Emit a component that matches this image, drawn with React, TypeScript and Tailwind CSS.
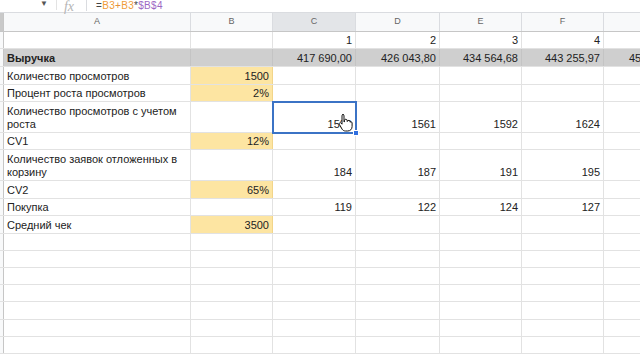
import React from 'react';

type Row = {
  h: string;
  label?: string;
  b?: string;
  yellow?: boolean;
  vals?: string[];
  total?: boolean;
};

const rows: Row[] = [
  { h: 'h-[17px]', vals: ['1', '2', '3', '4', ''] },
  { h: 'h-[18px]', label: 'Выручка', total: true, vals: ['417 690,00', '426 043,80', '434 564,68', '443 255,97', '452 121,09'] },
  { h: 'h-[18px]', label: 'Количество просмотров', b: '1500', yellow: true },
  { h: 'h-[17px]', label: 'Процент роста просмотров', b: '2%', yellow: true },
  { h: 'h-[31px]', label: 'Количество просмотров с учетом роста', vals: ['1530', '1561', '1592', '1624', ''] },
  { h: 'h-[17px]', label: 'CV1', b: '12%', yellow: true },
  { h: 'h-[31px]', label: 'Количество заявок отложенных в корзину', vals: ['184', '187', '191', '195', ''] },
  { h: 'h-[18px]', label: 'CV2', b: '65%', yellow: true },
  { h: 'h-[17px]', label: 'Покупка', vals: ['119', '122', '124', '127', ''] },
  { h: 'h-[18px]', label: 'Средний чек', b: '3500', yellow: true },
  { h: 'h-[17px]' },
  { h: 'h-[17px]' },
  { h: 'h-[17px]' },
  { h: 'h-[17px]' },
  { h: 'h-[18px]' },
  { h: 'h-[17px]' },
  { h: 'h-[17px]' },
];

const colW = ['w-[83px]', 'w-[84px]', 'w-[82px]', 'w-[82px]', 'w-[84px]'];
const letters = ['C', 'D', 'E', 'F', 'G'];

function Cursor() {
  return (
    <svg width="15" height="19" viewBox="0 0 15 19" className="absolute left-[338px] top-[113px]">
      <path
        d="M4.5 1.5c.9 0 1.5.6 1.5 1.5v6l.5-.3V7.5c0-.8.6-1.3 1.3-1.3s1.3.5 1.3 1.3v1l.4-.2c.2-.6.7-.9 1.3-.9.7 0 1.2.5 1.2 1.2v.6c.3-.3.6-.4 1-.4.6 0 1.1.5 1.1 1.1v3.6c0 2.6-1.8 4.5-4.4 4.5H7.4c-1.4 0-2.5-.7-3.3-1.8L1.4 11.4c-.4-.6-.2-1.3.4-1.6.5-.3 1.1-.1 1.4.3l.8 1.1V3c0-.9.6-1.5 1.5-1.5z"
        fill="#fff"
        stroke="#111"
        strokeWidth="1"
        strokeLinejoin="round"
      />
    </svg>
  );
}

export default function App() {
  return (
    <div className="relative h-[360px] w-[640px] overflow-hidden bg-white font-['Liberation_Sans',Arial,sans-serif] text-[11px] text-[#222]">
      {/* formula bar, scrolled so its top is cut */}
      <div className="flex h-[13px] items-start border-b border-[#dadce0] bg-white">
        <span className="ml-[40px] mt-[-2px] text-[8px] text-[#555]">▼</span>
        <span className="ml-[8px] h-[10px] w-px bg-[#e3e3e3]" />
        <span className="ml-[7px] mt-[-4px] font-['Liberation_Serif',serif] text-[14px] italic text-[#b5b5b5]">fx</span>
        <span className="ml-[12px] h-[11px] w-px bg-[#dadce0]" />
        <span className="ml-[9px] mt-[-2px] text-[10px] tracking-[0.3px]">
          <span className="text-[#444]">=</span>
          <span className="text-[#f09c38]">B3</span>
          <span className="text-[#e58f3a]">+</span>
          <span className="text-[#f09c38]">B3</span>
          <span className="text-[#444]">*</span>
          <span className="text-[#9c68c4]">$B$4</span>
        </span>
      </div>

      {/* column headers */}
      <div className="flex h-[19px] border-b border-[#c6c6c6] bg-[#f8f9fa] text-[9px] text-[#666]">
        <div className="w-[4px] shrink-0 border-r border-[#c6c6c6] bg-[#c9c9c9]" />
        <div className="flex w-[187px] shrink-0 items-center justify-center border-r border-[#dadce0]">A</div>
        <div className="flex w-[82px] shrink-0 items-center justify-center border-r border-[#dadce0]">B</div>
        {letters.map((l, i) => (
          <div
            key={l}
            className={`flex ${colW[i]} shrink-0 items-center justify-center border-r border-[#dadce0] ${l === 'C' ? 'bg-[#e3e5e8]' : ''} ${l === 'G' ? 'pl-[24px]' : ''}`}
          >
            {l}
          </div>
        ))}
      </div>

      {/* rows */}
      {rows.map((r, ri) => (
        <div key={ri} className={`flex ${r.h} border-b border-[#e2e2e2] ${r.total ? 'bg-[#cfcfcf] font-bold' : ''}`}>
          <div className="w-[4px] shrink-0 border-r border-[#c6c6c6] bg-[#f8f9fa]" />
          <div className={`flex w-[187px] shrink-0 items-end border-r ${r.total ? 'border-[#c4c4c4]' : 'border-[#e2e2e2]'} px-[3px] pb-[1px] leading-[13px]`}>
            <span className={r.label && r.label.length > 30 ? 'w-[172px]' : ''}>{r.label}</span>
          </div>
          <div
            className={`flex w-[82px] shrink-0 items-end justify-end border-r px-[3px] pb-[1px] leading-[13px] ${
              r.yellow ? 'border-[#f2d58a] bg-[#fde5a2]' : r.total ? 'border-[#c4c4c4]' : 'border-[#e2e2e2]'
            }`}
          >
            {r.b}
          </div>
          {colW.map((w, ci) => (
            <div
              key={ci}
              className={`flex ${w} shrink-0 items-end justify-end border-r ${r.total ? 'border-[#c4c4c4] font-normal' : 'border-[#e2e2e2]'} px-[3px] pb-[1px] leading-[13px]`}
            >
              {r.vals ? r.vals[ci] : ''}
            </div>
          ))}
        </div>
      ))}

      {/* selected cell C5 */}
      <div className="absolute left-[272px] top-[101px] h-[33px] w-[85px] border-2 border-[#3b73c5]" />
      <div className="absolute left-[353px] top-[130px] h-[6px] w-[6px] border border-white bg-[#2f6fe0]" />
      <Cursor />
    </div>
  );
}
